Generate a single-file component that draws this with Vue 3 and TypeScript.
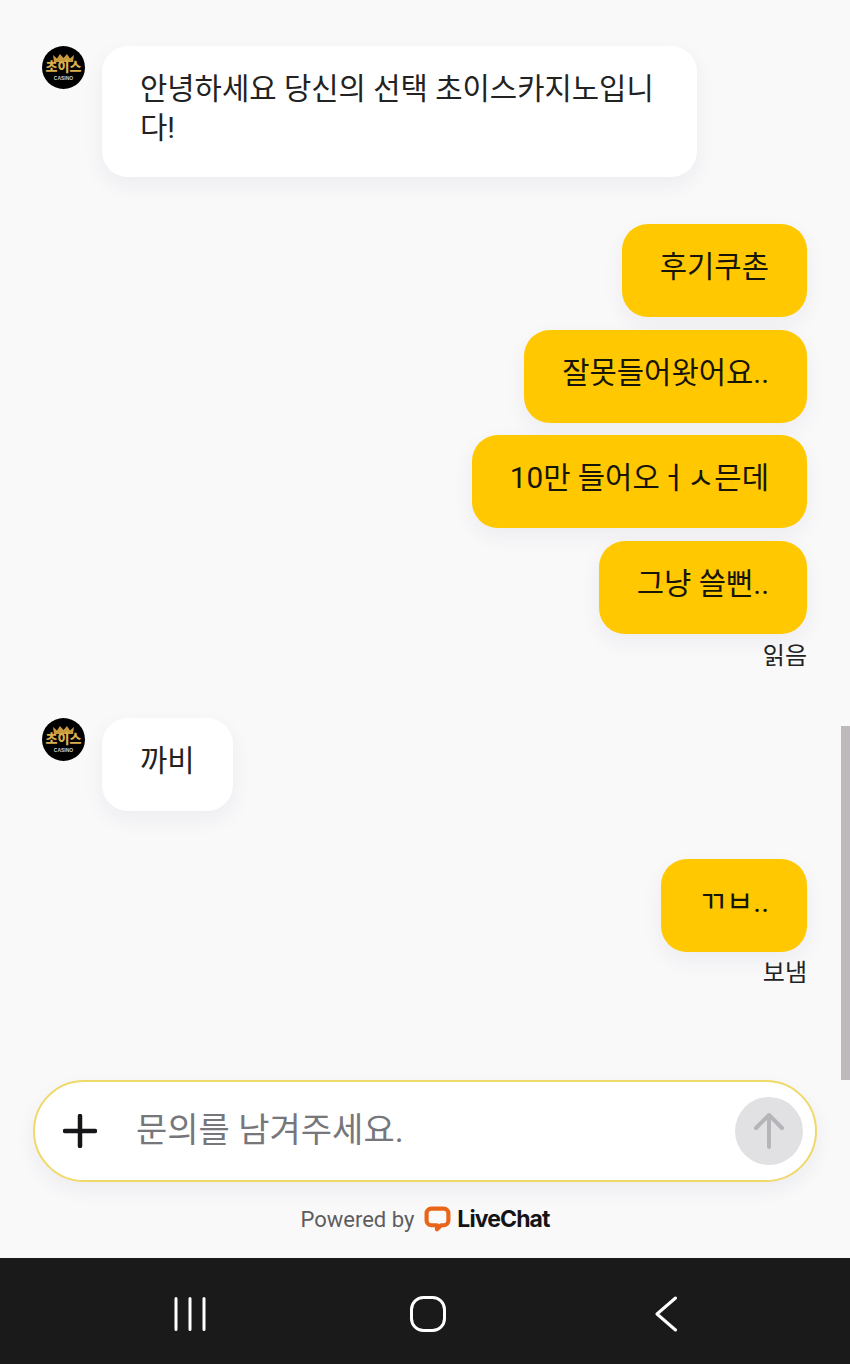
<script setup lang="ts">
type Row = { id: number; text: string }

const firstGroup: Row[] = [
  { id: 1, text: '후기쿠촌' },
  { id: 2, text: '잘못들어왓어요..' },
  { id: 3, text: '10만 들어오ㅓㅅ믄데' },
  { id: 4, text: '그냥 쓸뻔..' },
]
</script>

<template>
  <div class="screen">
    <main class="messages">
      <section class="incoming first">
        <svg class="avatar" viewBox="0 0 43 43" aria-hidden="true">
          <circle cx="21.5" cy="21.5" r="21.5" fill="#000" />
          <path d="M12 16l-1-7 4 3.500L18 8l3.500 4 3.500-4 3 4.500 4-3.500-1 7z" fill="#c79a3c" />
          <text x="21.5" y="25" text-anchor="middle" class="logo-main">초이스</text>
          <text x="21.5" y="33.700" text-anchor="middle" class="logo-sub">CASINO</text>
        </svg>
        <div class="bubble white">안녕하세요 당신의 선택 초이스카지노입니다!</div>
      </section>

      <section class="outgoing group-one">
        <div v-for="row in firstGroup" :key="row.id" class="bubble yellow">{{ row.text }}</div>
        <div class="status">읽음</div>
      </section>

      <section class="incoming second">
        <svg class="avatar" viewBox="0 0 43 43" aria-hidden="true">
          <circle cx="21.5" cy="21.5" r="21.5" fill="#000" />
          <path d="M12 16l-1-7 4 3.500L18 8l3.500 4 3.500-4 3 4.500 4-3.500-1 7z" fill="#c79a3c" />
          <text x="21.5" y="25" text-anchor="middle" class="logo-main">초이스</text>
          <text x="21.5" y="33.700" text-anchor="middle" class="logo-sub">CASINO</text>
        </svg>
        <div class="bubble white">까비</div>
      </section>

      <section class="outgoing group-two">
        <div class="bubble yellow">ㄲㅂ..</div>
        <div class="status">보냄</div>
      </section>
    </main>

    <div class="scrollbar"></div>

    <div class="composer">
      <svg class="plus" viewBox="0 0 34 34" aria-hidden="true">
        <path d="M17 2v30M2 17h30" fill="none" stroke="#16161a" stroke-width="4.500" stroke-linecap="round" />
      </svg>
      <span class="placeholder">문의를 남겨주세요.</span>
      <button class="send" aria-label="send">
        <svg viewBox="0 0 32 38" width="32" height="38" aria-hidden="true">
          <path d="M16 35V3M3 16L16 3l13 13" fill="none" stroke="#b4b4b9" stroke-width="4" stroke-linecap="round" stroke-linejoin="round" />
        </svg>
      </button>
    </div>

    <footer class="powered">
      <span class="powered-by">Powered by</span>
      <svg class="lc-logo" viewBox="0 0 26 26" aria-hidden="true">
        <path d="M7 2.500h12a4.500 4.500 0 0 1 4.500 4.500v7a4.500 4.500 0 0 1-4.500 4.500h-2.500l-4 4v-4H7A4.500 4.500 0 0 1 2.500 14V7A4.500 4.500 0 0 1 7 2.500z" fill="none" stroke="#e8651a" stroke-width="4" stroke-linejoin="round" />
      </svg>
      <span class="lc-name">LiveChat</span>
    </footer>

    <nav class="nav-bar">
      <svg width="32" height="34" viewBox="0 0 32 34" aria-hidden="true">
        <path d="M2 1.500v31M16 1.500v31M30 1.500v31" stroke="#fff" stroke-width="3" stroke-linecap="round" fill="none" />
      </svg>
      <svg width="36" height="36" viewBox="0 0 36 36" aria-hidden="true">
        <rect x="1.500" y="1.500" width="33" height="33" rx="12" fill="none" stroke="#fff" stroke-width="3" />
      </svg>
      <svg width="24" height="36" viewBox="0 0 24 36" aria-hidden="true">
        <path d="M21.500 2L3 18l18.500 16" fill="none" stroke="#fff" stroke-width="3" stroke-linecap="round" stroke-linejoin="round" />
      </svg>
    </nav>
  </div>
</template>

<style>
html,
body {
  margin: 0;
  background: #f9f9fa;
}
</style>

<style scoped>
.screen {
  position: relative;
  width: 850px;
  height: 1364px;
  display: flex;
  flex-direction: column;
  overflow: hidden;
  background: #f9f9fa;
  font-family: Roboto, 'Noto Sans CJK KR', sans-serif;
  color: #1b1b1d;
}

.messages {
  height: 1034px;
  box-sizing: border-box;
  padding: 46px 43px 0 42px;
  display: flex;
  flex-direction: column;
  flex-shrink: 0;
}

.incoming {
  display: flex;
  align-items: flex-start;
  gap: 17px;
}

.first .bubble {
  padding-bottom: 30px;
}

.second {
  margin-top: 46px;
}

.avatar {
  width: 43px;
  height: 43px;
  flex-shrink: 0;
}

.logo-main {
  font-family: 'Noto Sans CJK KR', sans-serif;
  font-size: 13px;
  font-weight: 900;
  fill: #dcae50;
}

.logo-sub {
  font-family: 'Liberation Sans', sans-serif;
  font-size: 5px;
  font-weight: 700;
  fill: #cfcfcf;
}

.bubble {
  box-sizing: border-box;
  max-width: 595px;
  padding: 23px 38px 31px;
  border-radius: 26px;
  font-size: 29.700px;
  line-height: 39px;
  box-shadow: 0 8px 22px rgba(40, 40, 60, 0.06);
}

.white {
  background: #fff;
  color: #222;
}

.yellow {
  background: #ffc800;
  color: #171408;
}

.outgoing {
  display: flex;
  flex-direction: column;
  align-items: flex-end;
  gap: 12.670px;
}

.group-one {
  margin-top: 47px;
}

.group-two {
  margin-top: 48px;
}

.status {
  margin-top: -7px;
  font-size: 24px;
  line-height: 32px;
  color: #222;
}

.scrollbar {
  position: absolute;
  top: 726px;
  right: 0;
  width: 9px;
  height: 354px;
  background: #bdb9bd;
}

.composer {
  box-sizing: border-box;
  width: 784px;
  height: 102px;
  margin-left: 33px;
  margin-top: 46px;
  padding: 0 12px 0 28px;
  display: flex;
  align-items: center;
  flex-shrink: 0;
  background: #fff;
  border: 2px solid #efd968;
  border-radius: 51px;
  box-shadow: 0 8px 20px rgba(40, 40, 60, 0.06);
}

.plus {
  width: 34px;
  height: 34px;
  flex-shrink: 0;
}

.placeholder {
  flex: 1;
  margin-left: 39px;
  padding-bottom: 7px;
  font-size: 34px;
  color: #77777b;
}

.send {
  width: 68px;
  height: 68px;
  padding: 0;
  border: 0;
  border-radius: 50%;
  display: flex;
  align-items: center;
  justify-content: center;
  background: #e1e1e4;
}

.powered {
  height: 76px;
  padding-bottom: 2px;
  box-sizing: border-box;
  display: flex;
  align-items: center;
  justify-content: center;
  flex-shrink: 0;
}

.powered-by {
  font-size: 22px;
  color: #5d5d60;
}

.lc-logo {
  width: 27px;
  height: 27px;
  margin-left: 10px;
}

.lc-name {
  margin-left: 6px;
  font-family: Inter, sans-serif;
  font-size: 23px;
  font-weight: 700;
  letter-spacing: -0.9px;
  color: #141416;
}

.nav-bar {
  height: 106px;
  padding: 6px 0 0 6px;
  box-sizing: border-box;
  display: grid;
  grid-template-columns: repeat(3, 238px);
  justify-content: center;
  justify-items: center;
  align-items: center;
  flex-shrink: 0;
  background: #1a1a1a;
}
</style>
